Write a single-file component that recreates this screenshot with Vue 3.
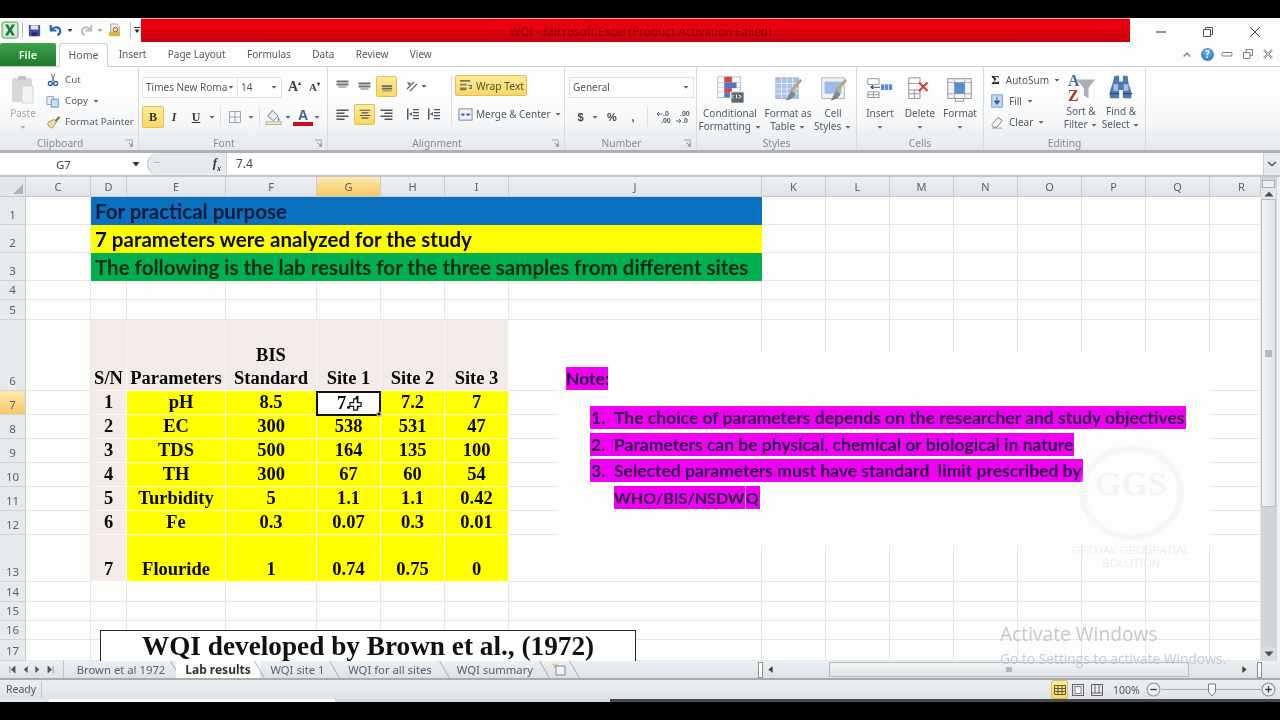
<script setup>
const cols = ['C','D','E','F','G','H','I','J','K','L','M','N','O','P','Q','R']
const rowNums = Array.from({ length: 17 }, (_, i) => i + 1)
const merged = {
  1: 'For practical purpose',
  2: '7 parameters were analyzed for the study',
  3: 'The following is the lab results for the three samples from different sites'
}
const table = {
  6: ['S/N', 'Parameters', 'BIS\nStandard', 'Site 1', 'Site 2', 'Site 3'],
  7: ['1', 'pH', '8.5', '7.4', '7.2', '7'],
  8: ['2', 'EC', '300', '538', '531', '47'],
  9: ['3', 'TDS', '500', '164', '135', '100'],
  10: ['4', 'TH', '300', '67', '60', '54'],
  11: ['5', 'Turbidity', '5', '1.1', '1.1', '0.42'],
  12: ['6', 'Fe', '0.3', '0.07', '0.3', '0.01'],
  13: ['7', 'Flouride', '1', '0.74', '0.75', '0']
}
const tableCols = ['D', 'E', 'F', 'G', 'H', 'I']

function buildRow(n) {
  if (merged[n]) {
    const rest = cols.slice(8)
    return [
      { key: 'C', cls: [] },
      { key: 'M', cls: ['merged', 'mg' + n], text: merged[n] },
      ...rest.map(k => ({ key: k, cls: [] }))
    ]
  }
  return cols.map(k => {
    const idx = tableCols.indexOf(k)
    if (idx < 0 || !table[n]) return { key: k, cls: [] }
    const cls = ['tb']
    if (n === 6 || k === 'D') cls.push('pink')
    else cls.push('yellow')
    if (n === 6 || n === 13) cls.push('bottom')
    if (n === 7 && k === 'E') cls.push('ph')
    if (n === 7 && k === 'G') cls.push('sel')
    return { key: k, cls, text: table[n][idx] }
  })
}
const rows = rowNums.map(n => ({ n, cells: buildRow(n) }))
const tabs = ['Insert', 'Page Layout', 'Formulas', 'Data', 'Review', 'View']
</script>

<template>
  <div class="app">
    <svg class="defs" width="0" height="0" aria-hidden="true">
      <symbol id="al-top" viewBox="0 0 16 16"><path d="M2 2h12v2H2zM2 5h12v2H2zM4 8h8v1H4z" fill="#6d7278"/></symbol>
      <symbol id="al-mid" viewBox="0 0 16 16"><path d="M2 4h12v2H2zM2 7h12v2H2zM4 10h8v1H4z" fill="#6d7278"/></symbol>
      <symbol id="al-bot" viewBox="0 0 16 16"><path d="M2 7h12v2H2zM2 10h12v2H2zM3 13h10v1H3z" fill="#6b6a55"/></symbol>
      <symbol id="al-l" viewBox="0 0 16 16"><path d="M2 3h12v1.4H2zM2 6h8v1.4H2zM2 9h12v1.4H2zM2 12h8v1.4H2z" fill="#555"/></symbol>
      <symbol id="al-c" viewBox="0 0 16 16"><path d="M2 3h12v1.4H2zM4 6h8v1.4H4zM2 9h12v1.4H2zM4 12h8v1.4H4z" fill="#555"/></symbol>
      <symbol id="al-r" viewBox="0 0 16 16"><path d="M2 3h12v1.4H2zM6 6h8v1.4H6zM2 9h12v1.4H2zM6 12h8v1.4H6z" fill="#555"/></symbol>
      <symbol id="indent" viewBox="0 0 16 16"><path d="M8 3h6v1.3H8zM8 6h6v1.3H8zM8 9h6v1.3H8zM8 12h6v1.3H8zM2 2.500h1.500v11H2z" fill="#555"/><path d="M4 8l3-2v4z" fill="#3a6ea8"/></symbol>
      <symbol id="caret" viewBox="0 0 8 8"><path d="M1.500 3h5L4 5.800z" fill="#666"/></symbol>
      <symbol id="launch" viewBox="0 0 10 10"><path d="M1 1h7v7" fill="none" stroke="#9aa0a6"/><path d="M4 4l4 4M5 8h3V5" fill="none" stroke="#7b8187"/></symbol>
      <symbol id="brush" viewBox="0 0 32 32"><path d="M31 6L21 18l-4-1 12-13z" fill="#b8a77c"/><path d="M20 17l4 3c-2 5-6 7-11 7 3-2 3-7 7-10z" fill="#7d8790"/></symbol>
    </svg>

    <div class="screen">
      <header class="title">
        <div class="qat">
          <svg class="q-logo" viewBox="0 0 18 18"><rect x="1" y="1" width="16" height="16" rx="2" fill="#d9ecd8" stroke="#5a9b62"/><path d="M4 3.500h3.200L9 7l1.800-3.500H14L10.700 9 14 14.500h-3.200L9 11l-1.800 3.500H4L7.300 9z" fill="#1d7a3a"/></svg>
          <i class="q-sep"></i>
          <svg class="q-i" viewBox="0 0 16 16"><path d="M2 2h11l1 1v11H2z" fill="#4a4c9e"/><rect x="4" y="2.500" width="8" height="4.500" fill="#dfe3f4"/><rect x="5" y="10" width="6" height="4" fill="#2b2c6e"/></svg>
          <svg class="q-i q-undo" viewBox="0 0 16 16"><path d="M3 2v6h6M4 7c3-4 9-3 9 2 0 2-1 3-3 4" fill="none" stroke="#2f63ae" stroke-width="2.300"/></svg>
          <svg class="q-c" viewBox="0 0 8 8"><path d="M1.500 3h5L4 6z" fill="#333"/></svg>
          <svg class="q-i q-redo" viewBox="0 0 16 16"><path d="M13 2v6H7M12 7C9 3 3 4 3 9c0 2 1 3 3 4" fill="none" stroke="#b7bcc2" stroke-width="2"/></svg>
          <svg class="q-c q-c2" viewBox="0 0 8 8"><path d="M1.500 3h5L4 6z" fill="#aaa"/></svg>
          <svg class="q-i q-prev" viewBox="0 0 16 16"><path d="M4 1h6l3 3v7H4z" fill="#f4f4f0" stroke="#9a9a90"/><rect x="2" y="9" width="12" height="5" rx="1" fill="#d8b64e"/><circle cx="9" cy="7" r="2.500" fill="#e8d9a0" stroke="#7a6a30"/></svg>
          <i class="q-sep q-sep2"></i>
          <svg class="q-c q-custom" viewBox="0 0 8 8"><path d="M1 1h6v1H1zM1.500 3.500h5L4 7z" fill="#222"/></svg>
        </div>
        <div class="redbar"><span>WQI - Microsoft Excel (Product Activation Failed)</span></div>
        <div class="winctl">
          <svg viewBox="0 0 12 12"><path d="M1 6h10" stroke="#555" stroke-width="1.200"/></svg>
          <svg viewBox="0 0 12 12"><path d="M1.500 3.500h7v7h-7zM3.500 3.500v-2h7v7h-2" fill="none" stroke="#555"/></svg>
          <svg viewBox="0 0 12 12"><path d="M1 1l10 10M11 1L1 11" stroke="#444"/></svg>
        </div>
      </header>

      <nav class="tabs">
        <div class="file">File</div>
        <div class="home">Home</div>
        <div v-for="t in tabs" :key="t" class="tab">{{ t }}</div>
        <div class="mdi">
          <svg class="m1" viewBox="0 0 12 12"><path d="M2 8l4-4 4 4-1.200 1L6 6.400 3.200 9z" fill="#8a9098"/></svg>
          <span class="help">?</span>
          <svg class="m2" viewBox="0 0 12 12"><rect x="1" y="4.500" width="10" height="3.500" rx="1" fill="none" stroke="#7a8088"/></svg>
          <svg class="m3" viewBox="0 0 12 12"><path d="M1.500 4.500h6.500v6H1.500zM4 4.500v-3h6.500v6H8" fill="none" stroke="#7a8088"/></svg>
          <svg class="m4" viewBox="0 0 12 12"><path d="M2 2l8 8M10 2l-8 8" stroke="#7a8088" stroke-width="2"/><path d="M2 2l8 8M10 2l-8 8" stroke="#fff" stroke-width=".7"/></svg>
        </div>
      </nav>

      <section class="ribbon">
        <div class="grp g-clip">
          <div class="body clip">
            <div class="paste">
              <svg viewBox="0 0 26 30"><rect x="2" y="3" width="20" height="24" rx="2" fill="#d5d7d9"/><rect x="8" y="1" width="8" height="4" fill="#c2c4c6"/><path d="M12 11h11v17H12z" fill="#f2f3f4" stroke="#d2d4d6"/></svg>
              <span>Paste</span>
              <svg class="cr" viewBox="0 0 8 8"><use href="#caret"/></svg>
            </div>
            <div class="smalls">
              <div class="sm"><svg viewBox="0 0 16 16"><path d="M6 1l3 8M10 1L7 9" stroke="#767c84" stroke-width="1.300" fill="none"/><circle cx="5" cy="12" r="2.300" fill="none" stroke="#2e5ea8" stroke-width="1.500"/><circle cx="11" cy="12" r="2.300" fill="none" stroke="#2e5ea8" stroke-width="1.500"/></svg><span>Cut</span></div>
              <div class="sm"><svg viewBox="0 0 16 16"><path d="M1 3h8v9H1z" fill="#e6eef8" stroke="#7a9cc8"/><path d="M6 6h8v9H6z" fill="#cfe0f4" stroke="#5c88c0"/></svg><span>Copy</span><svg class="cr" viewBox="0 0 8 8"><use href="#caret"/></svg></div>
              <div class="sm"><svg viewBox="0 0 16 16"><path d="M15 1l-5 5 2 2 4-5z" fill="#7a6a48"/><path d="M9 5L2 9c0 3 2 5 5 6l5-7z" fill="#efe3a8" stroke="#9a8c50"/></svg><span>Format Painter</span></div>
            </div>
          </div>
          <div class="lbl lbl-clip"><span></span><span>Clipboard</span><svg viewBox="0 0 10 10"><use href="#launch"/></svg></div>
        </div>

        <div class="grp g-font">
          <div class="body rows2">
            <div class="r r1">
              <div class="combo c-name"><span>Times New Roma</span><svg class="cr" viewBox="0 0 8 8"><use href="#caret"/></svg></div>
              <div class="combo c-size"><span>14</span><svg class="cr" viewBox="0 0 8 8"><use href="#caret"/></svg></div>
              <span class="grow">A<sup>▴</sup></span>
              <span class="shrink">A<sup>▾</sup></span>
            </div>
            <div class="r">
              <span class="on btn b-b">B</span>
              <span class="btn b-i">I</span>
              <span class="btn b-u">U</span>
              <svg class="cr" viewBox="0 0 8 8"><use href="#caret"/></svg>
              <i class="vs vs1"></i>
              <svg class="ic b-bord" viewBox="0 0 16 16"><path d="M2.500 2.500h11v11h-11zM8 2.500v11M2.500 8h11" fill="none" stroke="#9ea3a8"/></svg>
              <svg class="cr" viewBox="0 0 8 8"><use href="#caret"/></svg>
              <i class="vs vs2"></i>
              <svg class="ic b-fill" viewBox="0 0 18 18"><path d="M8 2l6 6-5 5-6-5z" fill="#e6eef4" stroke="#5b7a98"/><path d="M14 9c1 2 2 3 1 4s-2-1-1-4z" fill="#4a7ab0"/><rect x="1" y="14" width="16" height="3" fill="#f1eeb0" stroke="#b9b490"/></svg>
              <svg class="cr" viewBox="0 0 8 8"><use href="#caret"/></svg>
              <span class="fcolor">A</span>
              <svg class="cr" viewBox="0 0 8 8"><use href="#caret"/></svg>
            </div>
          </div>
          <div class="lbl"><span></span><span>Font</span><svg viewBox="0 0 10 10"><use href="#launch"/></svg></div>
        </div>

        <div class="grp g-align">
          <div class="body al">
            <div class="al-left">
              <div class="r a-r1">
                <svg class="ic s22" viewBox="0 0 16 16"><use href="#al-top"/></svg>
                <svg class="ic s22" viewBox="0 0 16 16"><use href="#al-mid"/></svg>
                <span class="on s22 tile"><svg viewBox="0 0 16 16"><use href="#al-bot"/></svg></span>
                <svg class="ic orient" viewBox="0 0 16 16"><path d="M3 11l7-7M6 13l7-7" stroke="#666" stroke-width="1.300"/><path d="M3 4l4 1-2 3z" fill="#7a5fa8"/></svg>
                <svg class="cr" viewBox="0 0 8 8"><use href="#caret"/></svg>
              </div>
              <div class="r a-r2">
                <svg class="ic s22" viewBox="0 0 16 16"><use href="#al-l"/></svg>
                <span class="on s22 tile"><svg viewBox="0 0 16 16"><use href="#al-c"/></svg></span>
                <svg class="ic s22" viewBox="0 0 16 16"><use href="#al-r"/></svg>
                <svg class="ic ind1" viewBox="0 0 16 16"><use href="#indent"/></svg>
                <svg class="ic ind2" viewBox="0 0 16 16"><use href="#indent"/></svg>
              </div>
            </div>
            <i class="vs al-sep"></i>
            <div class="al-right">
              <div class="wrap on">
                <svg viewBox="0 0 16 16"><path d="M1 2h11v2H1zM1 6h7v2H1zM1 10h7v3H1z" fill="#7d7a5c"/><path d="M10 8h3v3h-2" fill="none" stroke="#3b6ba8" stroke-width="1.300"/></svg>
                <span>Wrap Text</span>
              </div>
              <div class="merge">
                <svg viewBox="0 0 16 16"><rect x="1" y="2" width="14" height="12" fill="#eef2f6" stroke="#77808a"/><path d="M3 8h4M9 8h4" stroke="#3a6ea8" stroke-width="1.500"/><path d="M7 8L5 6v4zM9 8l2-2v4z" fill="#3a6ea8"/></svg>
                <span>Merge &amp; Center</span>
                <svg class="cr" viewBox="0 0 8 8"><use href="#caret"/></svg>
              </div>
            </div>
          </div>
          <div class="lbl"><span></span><span>Alignment</span><svg viewBox="0 0 10 10"><use href="#launch"/></svg></div>
        </div>

        <div class="grp g-num">
          <div class="body rows2">
            <div class="r">
              <div class="combo c-gen"><span>General</span><svg class="cr" viewBox="0 0 8 8"><use href="#caret"/></svg></div>
            </div>
            <div class="r n-r2">
              <span class="nm n-d">$</span>
              <svg class="cr" viewBox="0 0 8 8"><use href="#caret"/></svg>
              <span class="nm n-p">%</span>
              <span class="nm n-c">,</span>
              <i class="vs n-s"></i>
              <svg class="n-inc" viewBox="0 0 18 14"><text x="7" y="6" font-size="7" font-weight="700" fill="#555" font-family="Liberation Sans">.0</text><text x="5" y="13" font-size="7" font-weight="700" fill="#555" font-family="Liberation Sans">.00</text><path d="M1 4h5M1 4l2-2M1 4l2 2" stroke="#3a6ea8" fill="none"/></svg>
              <svg class="n-dec" viewBox="0 0 18 14"><text x="5" y="6" font-size="7" font-weight="700" fill="#555" font-family="Liberation Sans">.00</text><text x="7" y="13" font-size="7" font-weight="700" fill="#555" font-family="Liberation Sans">.0</text><path d="M1 11h5M6 11l-2-2M6 11l-2 2" stroke="#3a6ea8" fill="none"/></svg>
            </div>
          </div>
          <div class="lbl"><span></span><span>Number</span><svg viewBox="0 0 10 10"><use href="#launch"/></svg></div>
        </div>

        <div class="grp g-styles">
          <div class="body bigs">
            <div class="big w66">
              <svg viewBox="0 0 32 32"><rect x="3" y="2" width="24" height="22" fill="#fff" stroke="#b2b8c0"/><path d="M3 8h24M3 13h24M3 18h24M10 2v22M18 2v22" stroke="#c8ccd2"/><rect x="10" y="2" width="8" height="6" fill="#d8404a"/><rect x="10" y="8" width="13" height="6" fill="#4a7ac8"/><rect x="10" y="14" width="8" height="5" fill="#d8404a"/><rect x="10" y="19" width="6" height="5" fill="#4a7ac8"/><rect x="17" y="18" width="14" height="12" fill="#5c6670" stroke="#fff"/><path d="M20 21l-2 2 2 2M23 21v4M25 21l3 2-3 2" stroke="#fff" fill="none"/></svg>
              <span>Conditional</span><span>Formatting <svg class="cr" viewBox="0 0 8 8"><use href="#caret"/></svg></span>
            </div>
            <div class="big w50">
              <svg viewBox="0 0 32 32"><rect x="3" y="3" width="24" height="22" fill="#a9c3ea" stroke="#aeb4bc"/><path d="M3 9h24M3 15h24M3 20h24M9 3v22M15 3v22M21 3v22" stroke="#e6eefa"/><use href="#brush" width="32" height="32"/></svg>
              <span>Format as</span><span>Table <svg class="cr" viewBox="0 0 8 8"><use href="#caret"/></svg></span>
            </div>
            <div class="big w40">
              <svg viewBox="0 0 32 32"><rect x="4" y="3" width="24" height="22" fill="#eef2f7" stroke="#aeb4bc"/><rect x="7" y="7" width="18" height="13" fill="#9cb9e8"/><use href="#brush" width="32" height="32"/></svg>
              <span>Cell</span><span>Styles <svg class="cr" viewBox="0 0 8 8"><use href="#caret"/></svg></span>
            </div>
          </div>
          <div class="lbl lbl-plain">Styles</div>
        </div>

        <div class="grp g-cells">
          <div class="body bigs cells">
            <div class="big w40">
              <svg viewBox="0 0 32 32"><path d="M3 4h12v6H3zM3 18h12v6H3zM9 18v6M3 21h12" fill="#fff" stroke="#8a9098"/><rect x="17" y="10" width="12" height="6" fill="#5d8ccc"/><path d="M21 10v6M25 10v6" stroke="#d4e0f0"/><path d="M6 13h10M6 13l3-2M6 13l3 2" stroke="#2c4e80" fill="none" stroke-width="1.200"/></svg>
              <span>Insert</span><span><svg class="cr" viewBox="0 0 8 8"><use href="#caret"/></svg></span>
            </div>
            <div class="big w40">
              <svg viewBox="0 0 32 32"><path d="M4 3h12v6H4zM4 16h12v9H4zM10 16v9M4 20h12M4 9v7" fill="#fff" stroke="#8a9098"/><path d="M15 8l9 9M24 8l-9 9" stroke="#d8383a" stroke-width="2.200"/></svg>
              <span>Delete</span><span><svg class="cr" viewBox="0 0 8 8"><use href="#caret"/></svg></span>
            </div>
            <div class="big w40">
              <svg viewBox="0 0 32 32"><rect x="3" y="4" width="25" height="21" fill="#f3f5f7" stroke="#8a9098"/><path d="M3 8h25M3 20h25M10 4v21M21 4v21" stroke="#a8aeb4"/><rect x="10" y="8" width="11" height="12" fill="#5d8ccc"/><rect x="11" y="25" width="9" height="3" fill="#fff" stroke="#8a9098"/></svg>
              <span>Format</span><span><svg class="cr" viewBox="0 0 8 8"><use href="#caret"/></svg></span>
            </div>
          </div>
          <div class="lbl lbl-plain">Cells</div>
        </div>

        <div class="grp g-edit">
          <div class="body edit">
            <div class="smalls e-small">
              <div class="sm"><span class="sigma">Σ</span><span>AutoSum</span><svg class="cr" viewBox="0 0 8 8"><use href="#caret"/></svg></div>
              <div class="sm"><svg viewBox="0 0 16 16"><rect x="2" y="1" width="12" height="14" fill="#c6daf4" stroke="#6a8fc4"/><path d="M8 3v6M5 8l3 4 3-4z" fill="#2e5ea8" stroke="#2e5ea8"/></svg><span>Fill</span><svg class="cr" viewBox="0 0 8 8"><use href="#caret"/></svg></div>
              <div class="sm"><svg viewBox="0 0 16 16"><path d="M2 11l7-8 5 3-6 8H4z" fill="#f4f4f4" stroke="#777"/><path d="M2 15h12" stroke="#999"/></svg><span>Clear</span><svg class="cr" viewBox="0 0 8 8"><use href="#caret"/></svg></div>
            </div>
            <div class="big w40">
              <svg viewBox="0 0 32 32"><path d="M11 7h20l-7 9v11l-5-3v-8z" fill="#a9b0b8"/><text x="2" y="14" font-size="17" font-weight="700" fill="#3a6ea8" font-family="Liberation Serif">A</text><text x="2" y="30" font-size="17" font-weight="700" fill="#b8302c" font-family="Liberation Serif">Z</text></svg>
              <span>Sort &amp;</span><span>Filter <svg class="cr" viewBox="0 0 8 8"><use href="#caret"/></svg></span>
            </div>
            <div class="big w40">
              <svg viewBox="0 0 32 32"><path d="M9 3h5v6h4V3h5l1 8 3 9v7H18v-9h-4v9H4v-7l3-9z" fill="#5078ae"/><path d="M8 12h5v7H8zM19 12h5v7h-5z" fill="#a6c0e0"/><path d="M4 22h10M18 22h10" stroke="#2c4a74" stroke-width="1.500"/></svg>
              <span>Find &amp;</span><span>Select <svg class="cr" viewBox="0 0 8 8"><use href="#caret"/></svg></span>
            </div>
          </div>
          <div class="lbl lbl-plain">Editing</div>
        </div>
        <div class="rib-rest"></div>
      </section>

      <div class="fbar">
        <div class="namebox"><span>G7</span><svg viewBox="0 0 8 8"><path d="M.5 2h7L4 6.500z" fill="#333"/></svg></div>
        <div class="pill"><span class="pill-dot"></span><em>f<sub>x</sub></em></div>
        <div class="fvalue">7.4</div>
        <div class="fexpand"><svg viewBox="0 0 10 8"><path d="M1 2l4 3.500L9 2" stroke="#555" stroke-width="1.500" fill="none"/></svg></div>
      </div>

      <div class="sheet">
        <div class="grid">
          <div class="corner"><i></i></div>
          <div v-for="c in cols" :key="c" class="ch" :class="{ active: c === 'G', last: c === 'R' }">{{ c }}</div>
          <template v-for="r in rows" :key="r.n">
            <div class="rh" :class="{ active: r.n === 7 }">{{ r.n }}</div>
            <div v-for="cell in r.cells" :key="cell.key" class="cell" :class="cell.cls">
              <span v-if="cell.text">{{ cell.text }}</span>
              <template v-if="cell.cls.includes('sel')">
                <svg class="pointer" viewBox="0 0 14 14"><path d="M5 1h4v4h4v4H9v4H5V9H1V5h4z" fill="#fff" stroke="#111" stroke-width="1.200"/></svg>
              </template>
            </div>
          </template>

          <div class="notebox">
            <span class="note-h">Note:</span>
            <div class="note-list">
              <div class="hl"><b>1.</b><span>The choice of parameters depends on the researcher and study objectives</span></div>
              <div class="hl"><b>2.</b><span>Parameters can be physical, chemical or biological in nature</span></div>
              <div class="hl"><b>3.</b><span>Selected parameters must have standard&nbsp; limit prescribed by</span></div>
              <div class="hl hl4"><span>WHO/BIS/NSDW<i class="tcaret"></i>Q</span></div>
            </div>
          </div>

          <div class="wm">
            <div class="wm-ring"><span>GGS</span></div>
            <div class="wm-t">GEOJAY GEOSPATIAL<br>SOLUTION</div>
          </div>

          <div class="wqi">WQI developed by Brown et al., (1972)</div>
        </div>
        <div class="vscroll">
          <div class="v-split"></div>
          <div class="v-up"><svg viewBox="0 0 10 8"><path d="M5 1.500L9.500 6.500h-9z" fill="#4a5058"/></svg></div>
          <div class="v-thumb"><i></i></div>
          <div class="v-track"></div>
          <div class="v-down"><svg viewBox="0 0 10 8"><path d="M.5 1.500h9L5 6.500z" fill="#4a5058"/></svg></div>
        </div>
      </div>

      <div class="sheetbar">
        <div class="nav">
          <svg viewBox="0 0 8 10"><path d="M1 1v8M7 1L2.500 5 7 9z" fill="#555" stroke="#555" stroke-width=".6"/></svg>
          <svg viewBox="0 0 8 10"><path d="M6.500 1L2 5l4.500 4z" fill="#555"/></svg>
          <svg viewBox="0 0 8 10"><path d="M1.500 1L6 5 1.500 9z" fill="#555"/></svg>
          <svg viewBox="0 0 8 10"><path d="M7 1v8M1 1l4.500 4L1 9z" fill="#555" stroke="#555" stroke-width=".6"/></svg>
        </div>
        <div class="st st1">Brown et al 1972</div>
        <div class="st st2">Lab results</div>
        <div class="st st3">WQI site 1</div>
        <div class="st st4">WQI for all sites</div>
        <div class="st st5">WQI summary</div>
        <div class="st st6"><svg viewBox="0 0 16 14"><path d="M4 3h9v9H4z" fill="#eef3f8" stroke="#6b8cb0"/><path d="M4 2L2 4M1 1l1 1M5 .5v1.500" stroke="#d89a30" stroke-width="1.300"/></svg></div>
        <div class="sb-fill"></div>
        <i class="split s-l"></i>
        <svg class="h-a h-l" viewBox="0 0 8 10"><path d="M6.500 1L1.500 5l5 4z" fill="#444"/></svg>
        <div class="h-thumb"><i></i></div>
        <svg class="h-a h-r" viewBox="0 0 8 10"><path d="M1.500 1l5 4-5 4z" fill="#444"/></svg>
        <i class="split s-r"></i>
        <div class="h-end"></div>
      </div>

      <footer class="status">
        <span class="ready">Ready</span>
        <div class="st-fill"></div>
        <div class="view on"><svg viewBox="0 0 14 14"><path d="M1.500 2.500h11v9h-11zM1.500 5.500h11M1.500 8.500h11M5 2.500v9M9 2.500v9" fill="none" stroke="#5a5c40"/></svg></div>
        <svg class="v2" viewBox="0 0 14 14"><rect x="1.500" y="1.500" width="11" height="11" fill="#e2e6ea" stroke="#666"/><rect x="4" y="3.500" width="6" height="7" fill="#f8f8f8" stroke="#888"/></svg>
        <svg class="v3" viewBox="0 0 14 14"><path d="M1.500 1.500h11v11h-11zM1.500 10h11M5 1.500V10M9 1.500V10" fill="#e8ebee" stroke="#666"/></svg>
        <span class="pct">100%</span>
        <span class="zb"><svg viewBox="0 0 14 14"><circle cx="7" cy="7" r="6" fill="#eef1f4" stroke="#8a9098"/><path d="M4 7h6" stroke="#444" stroke-width="1.300"/></svg></span>
        <div class="slider"><svg viewBox="0 0 8 14"><path d="M.5 1h7v8L4 13 .5 9z" fill="#f4f6f8" stroke="#7a8088"/></svg></div>
        <span class="zb"><svg viewBox="0 0 14 14"><circle cx="7" cy="7" r="6" fill="#eef1f4" stroke="#8a9098"/><path d="M4 7h6M7 4v6" stroke="#444" stroke-width="1.300"/></svg></span>
      </footer>
      <div class="strip"><i class="st-a"></i><i class="st-b"></i><i class="st-c"></i><i class="st-d"></i></div>

      <div class="activate">
        <div class="a1">Activate Windows</div>
        <div class="a2">Go to Settings to activate Windows.</div>
      </div>
    </div>
  </div>
</template>

<style>
html, body { margin: 0; background: #000; }
</style>

<style scoped>
.app { width: 1280px; height: 720px; background: #000; overflow: hidden; padding-top: 18px; box-sizing: border-box; font-family: "Noto Sans", "Open Sans", sans-serif; color: #555b62; font-size: 10px; }
.defs { position: absolute; }
svg { display: block; flex: none; }
.screen { position: relative; height: 684px; display: flex; flex-direction: column; background: #fdfdfb; filter: blur(.3px); }
.cr { width: 8px; height: 8px; display: inline-block; vertical-align: middle; }

/* title */
.title { height: 24px; display: flex; flex: none; }
.qat { width: 141px; display: flex; align-items: center; padding-left: 1px; box-sizing: border-box; }
.q-logo { width: 18px; height: 18px; }
.q-sep { width: 1px; height: 16px; background: #b8bcc0; margin: 0 4px 0 3px; display: block; }
.q-i { width: 15px; height: 15px; }
.q-undo { margin-left: 6px; }
.q-c { width: 8px; height: 8px; margin-left: 2.500px; }
.q-redo { margin-left: 5.500px; }
.q-c2 { margin-left: 1.500px; }
.q-prev { margin-left: 3.500px; }
.q-sep2 { margin: 0 1px 0 7.500px; }
.q-custom { margin-left: 1px; }
.redbar { width: 989px; background: linear-gradient(#ee0010, #e2000c 50%, #c20010); border-top: 1px solid #f4a0a0; box-sizing: border-box; display: flex; justify-content: center; align-items: center; }
.redbar span { color: #8b0008; font-size: 11.700px; transform: translateX(5px); }
.winctl { flex: 1; display: flex; align-items: center; padding: 4px 0 0 25px; gap: 35px; }
.winctl svg { width: 12px; height: 12px; }

/* tabs */
.tabs { height: 24px; flex: none; display: flex; align-items: flex-end; border-bottom: 1px solid #c8cbce; margin-bottom: -1px; position: relative; z-index: 1; }
.file { width: 56px; height: 23px; background: linear-gradient(#3aa14a, #1f7a2c); color: #e8f6e8; font-weight: 600; font-size: 11px; text-align: center; line-height: 23px; border-radius: 2px 2px 0 0; flex: none; }
.home { width: 49px; margin-left: 3px; height: 24px; margin-bottom: -1px; border: 1px solid #cdd0d3; border-bottom: 1px solid #fdfdfb; border-radius: 3px 3px 0 0; box-sizing: border-box; background: #fff; text-align: center; line-height: 23px; font-size: 10.500px; flex: none; }
.tab { padding: 0 10.700px; font-size: 10px; line-height: 23px; flex: none; }
.mdi { margin-left: auto; display: flex; align-items: center; height: 24px; padding-right: 6px; }
.mdi svg { width: 12px; height: 12px; }
.m2 { margin-left: 7px; }
.m3 { margin-left: 9px; }
.m4 { margin-left: 8px; }
.help { width: 13px; height: 13px; border-radius: 50%; background: radial-gradient(circle at 50% 30%, #6ab0ee, #1c6cc0); color: #fff; font-weight: 700; text-align: center; line-height: 13px; font-size: 10px; margin-left: 8px; }

/* ribbon */
.ribbon { height: 84px; flex: none; display: flex; background: linear-gradient(#fdfdfd 30%, #f6f7f8 65%, #e6e9ec); }
.grp { display: flex; flex-direction: column; border-right: 1px solid #d8dbde; box-sizing: border-box; flex: none; }
.body { height: 70px; box-sizing: border-box; }
.lbl { height: 14px; display: grid; grid-template-columns: 1fr auto 1fr; align-items: center; color: #868c92; font-size: 10.200px; padding-right: 4px; }
.lbl > span:nth-child(2) { margin-right: 14px; }
.lbl svg { width: 9px; height: 9px; justify-self: end; }
.lbl-plain { display: block; text-align: center; line-height: 14px; padding: 0; }
.lbl-clip { padding-left: 0; grid-template-columns: 32px 1fr 9px; }
.lbl-clip > span:nth-child(2) { text-align: left; padding-left: 5px; margin-right: 0; }
.g-clip { width: 139px; }
.g-font { width: 189px; }
.g-align { width: 237px; }
.g-num { width: 132px; }
.g-styles { width: 160px; }
.g-cells { width: 127px; }
.g-edit { width: 162px; }
.rib-rest { flex: 1; }
.clip { display: flex; }
.clip .sm { font-size: 9.800px; }
.paste { width: 46px; display: flex; flex-direction: column; align-items: center; padding-top: 9px; box-sizing: border-box; color: #a4a8ac; }
.paste svg:first-child { width: 26px; height: 30px; }
.paste span { margin-top: 2px; line-height: 13px; }
.paste .cr { margin-top: 3px; opacity: .5; }
.smalls { padding-top: 3px; }
.sm { height: 21px; display: flex; align-items: center; gap: 5px; white-space: nowrap; }
.sm svg:first-child { width: 14px; height: 14px; }
.sm .cr { margin-left: -1px; }
.rows2 { padding-top: 10px; display: flex; flex-direction: column; gap: 8px; padding-left: 3px; }
.r { display: flex; align-items: center; height: 22px; }
.combo { height: 21px; display: flex; align-items: center; justify-content: space-between; border: 1px solid #dfe2e5; background: #fff; box-sizing: border-box; padding: 0 3px; color: #50565c; font-size: 10px; }
.c-name { width: 96px; white-space: nowrap; overflow: hidden; }
.c-size { width: 44px; border-left: none; }
.grow { margin-left: 6px; font: 700 14px "Liberation Serif", serif; color: #444; width: 18px; }
.shrink { font: 700 11px "Liberation Serif", serif; color: #444; margin-left: 3px; width: 16px; }
.grow sup, .shrink sup { font-size: 6px; color: #333; line-height: 0; }
.on { background: linear-gradient(#fdeb98, #f9d765); border: 1px solid #dfc05a; box-sizing: border-box; border-radius: 2px; }
.btn { height: 22px; display: flex; align-items: center; justify-content: center; font-family: "Liberation Serif", serif; font-weight: 700; font-size: 12px; color: #333; }
.b-b { width: 22px; }
.b-i { width: 20px; font-style: italic; }
.b-u { width: 24px; text-decoration: underline; }
.vs { width: 1px; background: #dcdfe2; height: 18px; display: block; flex: none; }
.vs1 { margin: 0 6px 0 4px; }
.ic { width: 16px; height: 16px; }
.b-bord { margin-right: 4px; }
.vs2 { margin: 0 5px 0 4px; }
.b-fill { width: 17px; height: 18px; margin-right: 2px; }
.fcolor { width: 20px; margin-left: 1px; text-align: center; font: 700 14px "Liberation Sans", sans-serif; line-height: 14px; color: #3f5e8c; border-bottom: 4px solid #c8101c; }
.al { display: flex; padding: 9px 0 0 4px; }
.al-left { width: 119px; display: flex; flex-direction: column; gap: 6px; }
.s22 { width: 21px; height: 21px; padding: 2.500px; box-sizing: border-box; margin-right: 1px; flex: none; }
.tile { display: block; }
.tile svg { width: 100%; height: 100%; }
.orient { margin-left: 6px; }
.ind1 { margin-left: 7px; }
.ind2 { margin-left: 5px; }
.al-sep { height: 50px; margin-top: 1px; }
.al-right { padding-left: 3px; display: flex; flex-direction: column; gap: 8px; }
.wrap { width: 72px; height: 21px; display: flex; align-items: center; padding-left: 3px; gap: 2px; color: #55523a; font-size: 10.300px; }
.wrap svg { width: 15px; height: 15px; }
.merge { display: flex; align-items: center; gap: 3px; padding-left: 3px; height: 20px; white-space: nowrap; }
.merge svg:first-child { width: 15px; height: 15px; }
.c-gen { width: 125px; margin-left: 1px; }
.n-r2 { padding-left: 7px; }
.nm { font-weight: 700; font-size: 11px; color: #444; font-family: "Liberation Sans", sans-serif; }
.n-d { width: 11px; text-align: center; margin-right: 5px; }
.n-p { width: 12px; margin-left: 7px; text-align: center; }
.n-c { width: 8px; margin-left: 11px; text-align: center; }
.n-s { margin: 0 8px 0 10px; }
.n-inc, .n-dec { width: 18px; height: 14px; }
.n-dec { margin-left: 1px; }
.bigs { display: flex; padding-top: 9px; }
.cells { padding-left: 3px; }
.big { display: flex; flex-direction: column; align-items: center; line-height: 13px; white-space: nowrap; flex: none; }
.big > svg { width: 32px; height: 30px; margin-bottom: 2px; }
.w66 { width: 66px; }
.w50 { width: 50px; }
.w40 { width: 40px; }
.edit { display: flex; }
.edit .big { padding-top: 7px; }
.e-small { width: 77px; padding-left: 6px; box-sizing: border-box; flex: none; }
.sigma { width: 14px; text-align: center; font: 700 13px "Liberation Serif", serif; color: #222; }

/* formula bar */
.fbar { height: 27px; flex: none; box-sizing: border-box; border-top: 3px solid #adb1b5; border-bottom: 2px solid #c4c8cc; display: flex; background: #fff; box-shadow: inset 0 -1px 0 #f0f1f2; }
.namebox { width: 145px; flex: none; display: flex; align-items: center; justify-content: space-between; padding: 0 5px 0 56px; box-sizing: border-box; font-size: 11.500px; color: #444; }
.namebox svg { width: 8px; height: 8px; }
.pill { width: 80px; flex: none; background: #e6eaed; border-radius: 11px 0 0 11px; display: flex; justify-content: space-between; align-items: center; padding: 0 5px 0 6px; box-sizing: border-box; border-left: 1px solid #c2c6ca; border-right: 1px solid #d0d3d6; margin: 0 0 0 2px; }
.pill-dot { width: 6px; height: 3px; border-top: 1px solid #bbb; }
.pill em { font: italic 700 13px "Liberation Serif", serif; color: #333; }
.pill sub { font-size: 8px; }
.fvalue { flex: 1; padding-left: 9px; line-height: 22px; font-size: 12px; color: #444; }
.fexpand { width: 16px; background: #e6eaed; display: flex; align-items: center; justify-content: center; border-left: 1px solid #cdd0d3; }
.fexpand svg { width: 10px; height: 8px; }

/* sheet */
.sheet { height: 484px; flex: none; display: flex; overflow: hidden; }
.grid { position: relative; width: 1261px; height: 484px; overflow: hidden; flex: none; display: grid; grid-template-columns: 26px 65px 36px 99px 91px 64px 64px 64px 253px 64px 64px 64px 64px 64px 64px 64px 51px; grid-template-rows: 20px 28px 28px 28px 19px 20px 71px 24px 24px 24px 24px 24px 24px 47px 20px 19px 19px 21px; }
.corner { background: #e3e7eb; border-right: 1px solid #c6cace; border-bottom: 1px solid #c6cace; box-sizing: border-box; position: relative; }
.corner i { display: block; position: absolute; right: 2px; bottom: 2px; border: 5px solid transparent; border-right-color: #b0b5ba; border-bottom-color: #b0b5ba; }
.ch { background: linear-gradient(#eef1f4, #dfe4e8); border-right: 1px solid #c9cdd1; border-bottom: 1px solid #c6cace; box-sizing: border-box; text-align: center; line-height: 20px; font-size: 11px; color: #5b6168; }
.ch.active { background: linear-gradient(#fce9ae, #f6c965); color: #6a5d36; }
.ch.last { padding-left: 13px; }
.rh { background: #e6eaed; border-right: 1px solid #c6cace; border-bottom: 1px solid #d0d4d8; box-sizing: border-box; display: flex; align-items: flex-end; justify-content: center; padding-bottom: 2px; font-size: 11.500px; color: #5b6168; }
.rh.active { background: linear-gradient(#fce9ae, #f6c965); }
.cell { background: #fdfdfb; border-right: 1px solid #e7e8e6; border-bottom: 1px solid #e7e8e6; box-sizing: border-box; position: relative; display: flex; align-items: center; justify-content: center; min-width: 0; }
.merged { grid-column: span 7; justify-content: flex-start; padding-left: 4px; font: 700 20.500px "Lato", sans-serif; color: #0a0a0a; border: none; white-space: nowrap; }
.mg1 { background: #0b70bd; color: #071c3a; }
.mg2 { background: #ffff00; }
.mg3 { background: #00b050; color: #062a14; }
.tb { font: 700 18.500px "Liberation Serif", serif; color: #080808; text-align: center; white-space: pre-line; line-height: 23px; }
.pink { background: #f3eaea; border-color: #fbf8f8; }
.yellow { background: #ffff00; border-color: #fafad8; }
.bottom { align-items: flex-end; }
.ph span { padding-left: 10px; }
.sel { border: 2.500px solid #111; background: #fdfdfb; width: calc(100% + 1px); margin-left: -1px; height: calc(100% + 1px); z-index: 2; }
.sel::after { content: ""; position: absolute; right: -3px; bottom: -3px; width: 4px; height: 4px; background: #111; border: 1px solid #fff; box-sizing: content-box; transform: scale(.75); }
.pointer { position: absolute; left: 31px; top: 5px; width: 13px; height: 13px; }

.notebox { position: absolute; left: 558px; top: 175px; width: 652px; height: 193px; background: #fdfdfb; padding: 15px 0 0 8px; box-sizing: border-box; font: 700 17.500px "Lato", sans-serif; color: #28004a; z-index: 3; display: flex; flex-direction: column; align-items: flex-start; }
.note-h { background: #f000f0; height: 23px; line-height: 23px; width: 42px; display: block; white-space: nowrap; overflow: hidden; }
.note-list { margin: 16px 0 0 24px; display: flex; flex-direction: column; gap: 3.670px; align-items: flex-start; }
.hl { background: #f000f0; height: 23px; line-height: 23px; display: flex; white-space: pre; padding-right: 1px; }
.hl b { width: 24px; padding-left: 1px; box-sizing: border-box; font-weight: 700; }
.hl4 { margin-left: 24px; font-size: 16px; }
.tcaret { display: inline-block; width: 1px; height: 23px; background: #b0a8b8; vertical-align: top; }

.wm { position: absolute; left: 1066px; top: 268px; width: 130px; z-index: 4; display: flex; flex-direction: column; align-items: center; pointer-events: none; }
.wm-ring { width: 105px; height: 95px; border-radius: 50%; border: 6px solid rgba(228, 234, 236, .3); box-sizing: border-box; display: flex; align-items: center; justify-content: center; padding-bottom: 18px; flex: none; }
.wm-ring span { font: 700 34px "Liberation Serif", serif; color: rgba(224, 232, 240, .45); }
.wm-t { margin-top: 4px; text-align: center; color: rgba(220, 222, 222, .55); font: 400 11.300px/13px "Liberation Sans", sans-serif; white-space: nowrap; }

.wqi { position: absolute; left: 100px; top: 453px; width: 536px; height: 34px; box-sizing: border-box; background: #fff; border: 1.500px solid #2a2a2a; text-align: center; font: 700 27.250px/31px "Liberation Serif", serif; color: #111; z-index: 3; white-space: nowrap; }

.vscroll { flex: 1; background: #cfd5da; display: flex; flex-direction: column; padding-right: 4px; box-shadow: inset -3px 0 0 #eef0f2; }
.v-split { height: 6px; margin: 3px 1px 0; border: 1px solid #a8adb2; background: #eef0f2; flex: none; }
.v-up { height: 11px; display: flex; align-items: center; justify-content: center; flex: none; background: #e6e9ec; }
.v-up svg, .v-down svg { width: 10px; height: 8px; }
.v-thumb { height: 308px; flex: none; background: linear-gradient(90deg, #f2f4f6, #dfe4e8); border: 1px solid #b8bdc2; box-sizing: border-box; display: flex; align-items: center; justify-content: center; }
.v-thumb i { width: 7px; height: 7px; background: #b4b9be; display: block; }
.v-track { flex: 1; }
.v-down { height: 14px; flex: none; display: flex; align-items: center; justify-content: center; background: #d8dde1; }

/* sheet tabs */
.sheetbar { height: 17px; flex: none; display: flex; align-items: center; background: linear-gradient(#ecf0f3, #dde2e6); }
.nav { width: 64px; height: 17px; flex: none; display: flex; align-items: center; justify-content: space-around; padding: 0 6px; box-sizing: border-box; border-right: 1px solid #c0c4c8; }
.nav svg { width: 7px; height: 9px; }
.st { height: 17px; line-height: 17px; text-align: center; flex: none; font-size: 11.300px; color: #5a6067; box-sizing: border-box; position: relative; white-space: nowrap; }
.st::after { content: ""; position: absolute; right: 0; top: 0; height: 17px; border-right: 1px solid #a8adb2; transform: skewX(30deg); }
.st1 { width: 112px; padding-left: 2px; }
.st2 { width: 84px; background: #fdfdfb; color: #333; font-weight: 700; font-size: 12px; }
.st3 { width: 75px; }
.st4 { width: 110px; }
.st5 { width: 100px; }
.st6 { width: 30px; display: flex; justify-content: center; align-items: center; }
.st6 svg { width: 16px; height: 14px; }
.sb-fill { flex: 1; }
.split { width: 3px; height: 14px; background: #fdfdfb; border: 1px solid #8a9096; display: block; flex: none; box-sizing: content-box; }
.s-l { margin-right: 4px; }
.h-a { width: 7px; height: 9px; }
.h-thumb { width: 360px; height: 15px; margin: 0 52px 0 55px; background: linear-gradient(#f2f4f6, #dfe4e8); border: 1px solid #b8bdc2; box-sizing: border-box; display: flex; justify-content: center; align-items: center; flex: none; }
.h-thumb i { width: 6px; height: 5px; background: #b4b9be; display: block; }
.s-r { margin-left: 9px; }
.h-end { width: 18px; flex: none; }

/* status */
.status { height: 21px; flex: none; display: flex; align-items: center; border-top: 2px solid #a8acb0; box-sizing: border-box; background: linear-gradient(#eceff2, #dfe3e7); }
.ready { width: 42px; flex: none; border-right: 1px solid #c0c4c8; padding-left: 6px; box-sizing: border-box; line-height: 17px; font-size: 10.500px; }
.st-fill { flex: 1; }
.view { width: 17px; height: 19px; display: flex; align-items: center; justify-content: center; margin-right: 3px; }
.view svg, .v2, .v3 { width: 14px; height: 14px; }
.v2 { margin-right: 5px; }
.pct { margin-left: 9px; font-size: 10.500px; width: 27px; }
.zb { margin-left: 6px; }
.zb svg { width: 15px; height: 15px; }
.slider { width: 99px; height: 1px; background: #a8adb2; margin: 0 0 0 1px; display: flex; justify-content: center; align-items: center; }
.slider svg { width: 8px; height: 14px; }
.status > .zb:last-child { margin: 0 4px 0 0; }
.strip { flex: 1; display: flex; background: #dfe3e7; }
.strip i { display: block; height: 100%; }
.st-a { width: 49px; background: #e4e7ea; }
.st-b { width: 286px; background: #fdfdfd; }
.st-c { width: 275px; background: #d8d8d8; }
.st-d { flex: 1; background: #4a4a4a; }

.activate { position: absolute; left: 1000px; top: 603px; z-index: 5; pointer-events: none; white-space: nowrap; }
.a1 { font: 400 19.200px/26px "Open Sans", sans-serif; color: #c6c8c8; }
.a2 { margin-top: 3px; font: 400 13.800px/17px "Open Sans", sans-serif; color: #c8cbcc; }
</style>
